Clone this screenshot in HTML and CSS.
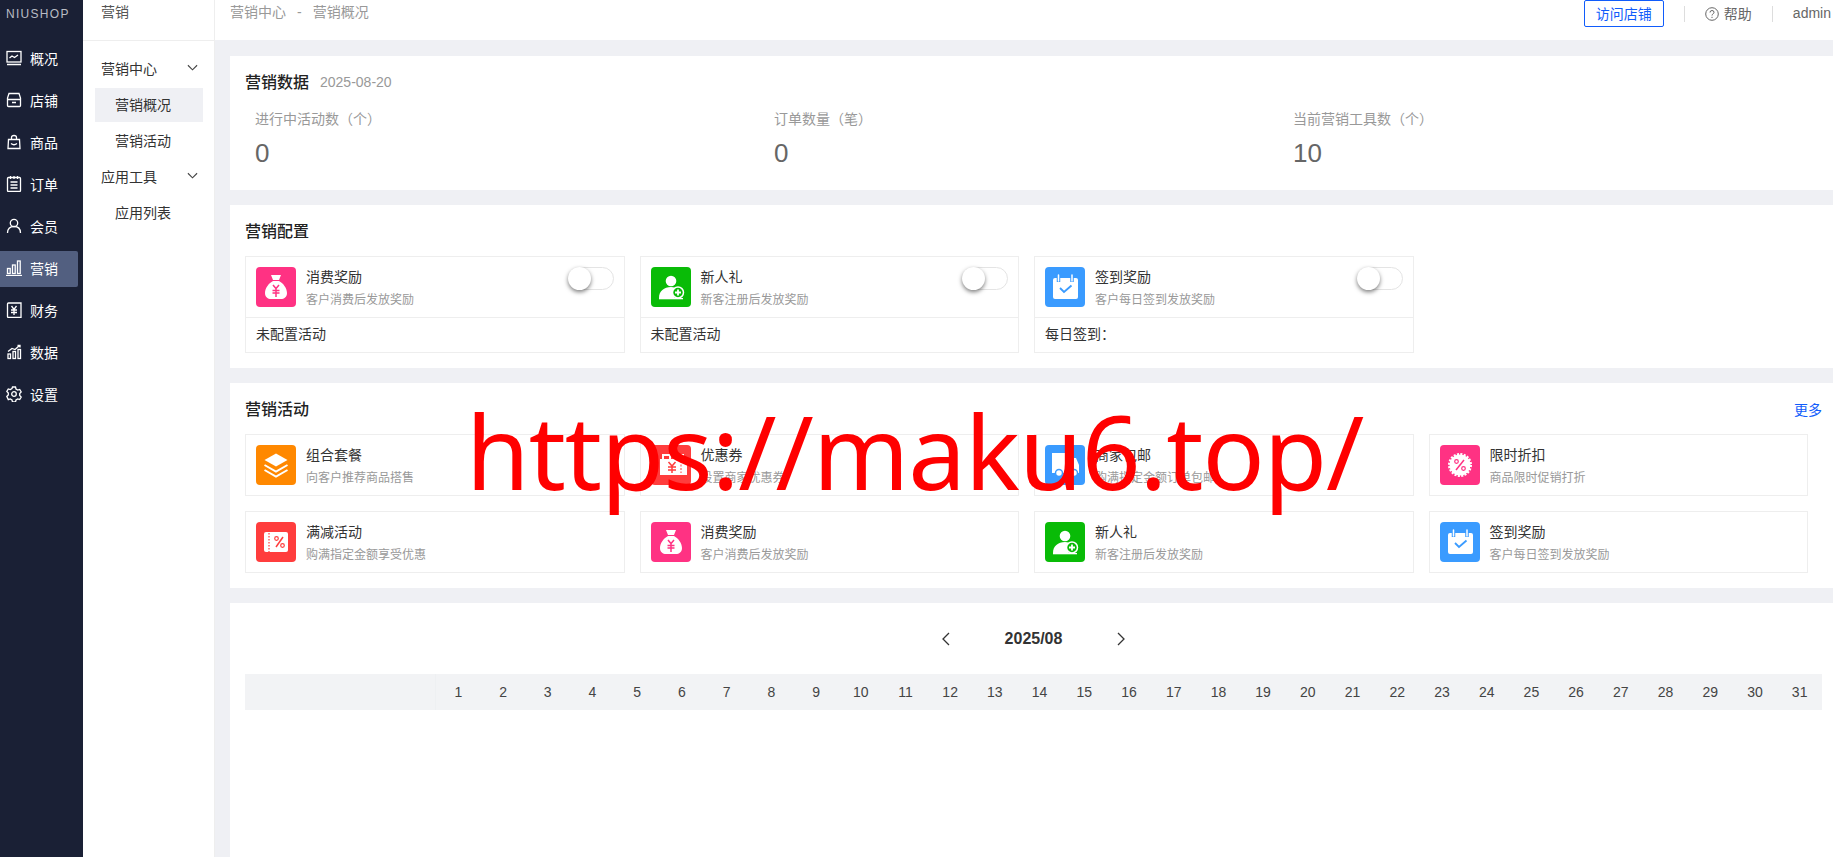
FILE: index.html
```html
<!DOCTYPE html>
<html lang="zh-CN">
<head>
<meta charset="UTF-8" />
<title>营销概况</title>
<link rel="stylesheet" href="styles.css">
</head>
<body>
<svg class="defs" width="0" height="0">
  <symbol id="ic-bag" viewBox="0 0 40 40">
    <rect width="40" height="40" rx="4" fill="#ff3283"/>
    <path d="M15 8h10l-2 5h-6z M17 14h6c4 2 8 7 8 12 0 4-3 6-6 6H15c-3 0-6-2-6-6 0-5 4-10 8-12z" fill="#fff"/>
    <path d="M17 18l3 3.500 3-3.500M16.500 23.500h7M16.500 26h7M20 21.500V30" fill="none" stroke="#ff3283" stroke-width="1.500"/>
  </symbol>
  <symbol id="ic-user" viewBox="0 0 40 40">
    <rect width="40" height="40" rx="4" fill="#09bb07"/>
    <circle cx="20" cy="14" r="5.300" fill="#fff"/>
    <path d="M8 31c0-7 5-11 12-11 3 0 5 1 6 2-3 2-4 6-2 9z" fill="#fff"/>
    <rect x="8" y="31" width="24" height="1.300" fill="#fff"/>
    <circle cx="27" cy="25.500" r="5.500" fill="#09bb07" stroke="#fff" stroke-width="1.500"/>
    <path d="M27 22.500v6M24 25.500h6" stroke="#fff" stroke-width="1.800"/>
  </symbol>
  <symbol id="ic-sign" viewBox="0 0 40 40">
    <rect width="40" height="40" rx="4" fill="#3a9bff"/>
    <rect x="8" y="11" width="25" height="21" rx="2" fill="#fff"/>
    <path d="M13.500 8v7M27 8v7" stroke="#3a9bff" stroke-width="3.500"/>
    <path d="M13.500 8v6M27 8v6" stroke="#fff" stroke-width="1.500" stroke-linecap="round"/>
    <path d="M15 21l4 4 7.500-6.500" fill="none" stroke="#3a9bff" stroke-width="1.800"/>
  </symbol>
  <symbol id="ic-layers" viewBox="0 0 40 40">
    <rect width="40" height="40" rx="4" fill="#ff8800"/>
    <path d="M20 8.500l11.500 6.500-11.500 6.500-11.500-6.500z" fill="#fff"/>
    <path d="M8.500 20l11.500 6.500 11.500-6.500M8.500 25l11.500 6.500 11.500-6.500" fill="none" stroke="#fff" stroke-width="2"/>
  </symbol>
  <symbol id="ic-coupon" viewBox="0 0 40 40">
    <rect width="40" height="40" rx="4" fill="#ff3d3d"/>
    <path d="M9 14h27v16H9z" fill="#fff"/>
    <path d="M12 14v-4h7v4M25 14v-4h7v4" fill="none" stroke="#fff" stroke-width="2"/>
    <path d="M17.500 17l3.500 4 3.500-4M17 22h8M17 25h8M21 21v7" fill="none" stroke="#ff3d3d" stroke-width="1.500"/>
    <path d="M30 16v12" stroke="#ff3d3d" stroke-width="1" stroke-dasharray="2 1.500"/>
  </symbol>
  <symbol id="ic-truck" viewBox="0 0 40 40">
    <rect width="40" height="40" rx="4" fill="#3a9bff"/>
    <path d="M7 8h21v20H7z M29 13h2l3 7v8h-5z" fill="#fff"/>
    <circle cx="14" cy="28" r="3.500" fill="#fff" stroke="#3a9bff" stroke-width="1.500"/>
    <circle cx="29" cy="28" r="3.500" fill="#fff" stroke="#3a9bff" stroke-width="1.500"/>
  </symbol>
  <symbol id="ic-percent" viewBox="0 0 40 40">
    <rect width="40" height="40" rx="4" fill="#ff3283"/>
    <circle cx="20" cy="20" r="10.500" fill="#fff" stroke="#fff" stroke-width="3" stroke-dasharray="2 1.300"/>
    <circle cx="20" cy="20" r="10" fill="#fff"/>
    <path d="M24 15l-8 10" stroke="#ff3283" stroke-width="1.500"/>
    <circle cx="16.500" cy="16.500" r="1.800" fill="none" stroke="#ff3283" stroke-width="1.200"/>
    <circle cx="23.500" cy="23.500" r="1.800" fill="none" stroke="#ff3283" stroke-width="1.200"/>
  </symbol>
  <symbol id="ic-ticket" viewBox="0 0 40 40">
    <rect width="40" height="40" rx="4" fill="#ff3d3d"/>
    <rect x="8" y="10" width="24" height="20" rx="2" fill="#fff"/>
    <path d="M13 8v24" stroke="#ff3d3d" stroke-width="1.200" stroke-dasharray="1.500 1.500"/>
    <path d="M27 15l-7 10" stroke="#ff3d3d" stroke-width="1.500"/>
    <circle cx="20.500" cy="16.500" r="1.800" fill="none" stroke="#ff3d3d" stroke-width="1.200"/>
    <circle cx="26.500" cy="23.500" r="1.800" fill="none" stroke="#ff3d3d" stroke-width="1.200"/>
  </symbol>
</svg>

<div class="app">
  <nav class="side">
    <div class="logo">NIUSHOP</div>
    <a class="side-item">
      <svg viewBox="0 0 16 16"><rect x="1" y="1.500" width="14" height="10.500"/><path d="M1 14.500h14M3.500 8l2.500-2 2.500 1.500 3.500-2.500"/></svg>
      概况
    </a>
    <a class="side-item">
      <svg viewBox="0 0 16 16"><path d="M3 1.500h10l1.500 4.500v1.500h-13V6zM1.500 8v5.500q0 1 1 1h11q1 0 1-1V8M1.500 7.500h13M6 10.500h4"/></svg>
      店铺
    </a>
    <a class="side-item">
      <svg viewBox="0 0 16 16"><path d="M2.500 5.500h11l.5 9H2zM5.500 5.500V3.500q0-2 2.500-2t2.500 2v2M5 9.500q3 2.500 6 0"/></svg>
      商品
    </a>
    <a class="side-item">
      <svg viewBox="0 0 16 16"><rect x="1.500" y="1.500" width="13" height="14" rx="1"/><path d="M4.500 0v3M8 0v3M11.500 0v3M4.500 6h7M4.500 9h7M4.500 12h7"/></svg>
      订单
    </a>
    <a class="side-item">
      <svg viewBox="0 0 16 16"><circle cx="8" cy="5" r="3.700"/><path d="M1.500 15q0-6.500 6.500-6.500t6.500 6.500"/></svg>
      会员
    </a>
    <a class="side-item active">
      <svg viewBox="0 0 16 16"><rect x="1.500" y="8.500" width="2.700" height="5"/><rect x="6.500" y="5" width="2.700" height="8.500"/><rect x="11.500" y="1" width="2.700" height="12.500"/><path d="M0 15.500h16"/></svg>
      营销
    </a>
    <a class="side-item">
      <svg viewBox="0 0 16 16"><path d="M2.500 1h12.500v14.500H2.500q-1 0-1-1V2q0-1 1-1z"/><path d="M5.500 4l2.500 3.500L10.500 4M5 8h6M5 10.500h6M8 7.500V13"/></svg>
      财务
    </a>
    <a class="side-item">
      <svg viewBox="0 0 16 16"><rect x="2" y="10" width="2.500" height="4.500"/><rect x="7" y="7.500" width="2.500" height="7"/><rect x="12" y="5.500" width="2.500" height="9"/><path d="M2 7.500l4-3 3 1 4.500-4M11.500 1.500h2.500v2"/></svg>
      数据
    </a>
    <a class="side-item">
      <svg viewBox="0 0 16 16"><path d="M6.500 1h3l.5 2 1.700 1 2-.6 1.500 2.600-1.500 1.500v2l1.500 1.500-1.500 2.600-2-.6-1.700 1-.5 2h-3l-.5-2-1.700-1-2 .6L.8 10.500 2.300 9V7L.8 5.500l1.500-2.600 2 .6L6 2.500z"/><circle cx="8" cy="8" r="2.300"/></svg>
      设置
    </a>
  </nav>

  <aside class="sub">
    <div class="sub-title">营销</div>
    <div class="sub-list">
      <div class="sub-group">营销中心<svg viewBox="0 0 12 8"><path d="M1 1l5 5 5-5"/></svg></div>
      <div class="sub-item active">营销概况</div>
      <div class="sub-item">营销活动</div>
      <div class="sub-group">应用工具<svg viewBox="0 0 12 8"><path d="M1 1l5 5 5-5"/></svg></div>
      <div class="sub-item">应用列表</div>
    </div>
  </aside>

  <div class="main">
    <header class="top">
      <div class="crumb"><span>营销中心</span><span>-</span><span>营销概况</span></div>
      <div class="top-right">
        <button class="visit">访问店铺</button>
        <i class="sep"></i>
        <div class="help">
          <svg viewBox="0 0 14 14"><circle cx="7" cy="7" r="6.300"/><path d="M5 5.500q0-2 2-2t2 1.800q0 1-1 1.600T7 8.500"/><path d="M7 9.800v1.200"/></svg>
          帮助
        </div>
        <i class="sep"></i>
        <div class="admin">admin</div>
      </div>
    </header>

    <section class="panel panel-data">
      <div class="title-row"><h2>营销数据</h2><span class="date">2025-08-20</span></div>
      <div class="stats">
        <div class="stat"><p>进行中活动数（个）</p><b>0</b></div>
        <div class="stat"><p>订单数量（笔）</p><b>0</b></div>
        <div class="stat"><p>当前营销工具数（个）</p><b>10</b></div>
      </div>
    </section>

    <section class="panel panel-config">
      <div class="title-row"><h2>营销配置</h2></div>
      <div class="grid">
        <div class="box">
          <div class="box-head">
            <svg class="icon"><use href="#ic-bag"/></svg>
            <div class="box-text"><h3>消费奖励</h3><p>客户消费后发放奖励</p></div>
            <span class="switch"></span>
          </div>
          <div class="box-foot">未配置活动</div>
        </div>
        <div class="box">
          <div class="box-head">
            <svg class="icon"><use href="#ic-user"/></svg>
            <div class="box-text"><h3>新人礼</h3><p>新客注册后发放奖励</p></div>
            <span class="switch"></span>
          </div>
          <div class="box-foot">未配置活动</div>
        </div>
        <div class="box">
          <div class="box-head">
            <svg class="icon"><use href="#ic-sign"/></svg>
            <div class="box-text"><h3>签到奖励</h3><p>客户每日签到发放奖励</p></div>
            <span class="switch"></span>
          </div>
          <div class="box-foot">每日签到：</div>
        </div>
      </div>
    </section>

    <section class="panel panel-act">
      <div class="title-row between"><h2>营销活动</h2><a class="more">更多</a></div>
      <div class="grid">
        <div class="box box-head"><svg class="icon"><use href="#ic-layers"/></svg><div class="box-text"><h3>组合套餐</h3><p>向客户推荐商品搭售</p></div></div>
        <div class="box box-head"><svg class="icon"><use href="#ic-coupon"/></svg><div class="box-text"><h3>优惠券</h3><p>设置商家优惠券</p></div></div>
        <div class="box box-head"><svg class="icon"><use href="#ic-truck"/></svg><div class="box-text"><h3>商家包邮</h3><p>购满指定金额订单包邮</p></div></div>
        <div class="box box-head"><svg class="icon"><use href="#ic-percent"/></svg><div class="box-text"><h3>限时折扣</h3><p>商品限时促销打折</p></div></div>
        <div class="box box-head"><svg class="icon"><use href="#ic-ticket"/></svg><div class="box-text"><h3>满减活动</h3><p>购满指定金额享受优惠</p></div></div>
        <div class="box box-head"><svg class="icon"><use href="#ic-bag"/></svg><div class="box-text"><h3>消费奖励</h3><p>客户消费后发放奖励</p></div></div>
        <div class="box box-head"><svg class="icon"><use href="#ic-user"/></svg><div class="box-text"><h3>新人礼</h3><p>新客注册后发放奖励</p></div></div>
        <div class="box box-head"><svg class="icon"><use href="#ic-sign"/></svg><div class="box-text"><h3>签到奖励</h3><p>客户每日签到发放奖励</p></div></div>
      </div>
    </section>

    <section class="panel panel-cal">
      <div class="month">
        <svg viewBox="0 0 8 14"><path d="M7 1L1 7l6 6"/></svg>
        <b>2025/08</b>
        <svg viewBox="0 0 8 14"><path d="M1 1l6 6-6 6"/></svg>
      </div>
      <div class="days">
        <div class="days-label"></div>
        <span>1</span><span>2</span><span>3</span><span>4</span><span>5</span><span>6</span><span>7</span><span>8</span><span>9</span><span>10</span>
        <span>11</span><span>12</span><span>13</span><span>14</span><span>15</span><span>16</span><span>17</span><span>18</span><span>19</span><span>20</span>
        <span>21</span><span>22</span><span>23</span><span>24</span><span>25</span><span>26</span><span>27</span><span>28</span><span>29</span><span>30</span><span>31</span>
      </div>
    </section>
  </div>

  <div class="watermark">https://maku6.top/</div>
</div>
</body>
</html>
```

FILE: styles.css
```css
* {
  box-sizing: border-box;
}
html, body {
  margin: 0;
  height: 100%;
  overflow: hidden;
}
body {
  font-family: "Liberation Sans", "Noto Sans CJK SC", sans-serif;
  font-size: 14px;
  color: #333;
  background: #eff0f4;
}
h2, h3, p {
  margin: 0;
  font-weight: normal;
}
.defs {
  position: absolute;
}
.app {
  display: flex;
  height: 857px;
  position: relative;
}

/* left nav */
.side {
  width: 83px;
  flex: none;
  background: #1a2035;
  color: #fff;
}
.logo {
  height: 41px;
  padding: 6px 0 0 6px;
  font-size: 12px;
  line-height: 17px;
  letter-spacing: 1.300px;
  color: #b9bcc4;
}
.side-item {
  display: flex;
  align-items: center;
  gap: 8px;
  width: 78px;
  height: 36px;
  margin-bottom: 6px;
  padding: 0 0 2px 6px;
  border-radius: 0 2px 2px 0;
}
.side-item svg {
  width: 16px;
  height: 16px;
  fill: none;
  stroke: #fff;
  stroke-width: 1.300;
}
.side-item.active {
  background: #525f80;
}

/* second nav */
.sub {
  width: 132px;
  flex: none;
  background: #fff;
  border-right: 1px solid #eee;
}
.sub-title {
  height: 41px;
  padding: 3px 0 0 18px;
  line-height: 19px;
  color: #555;
  border-bottom: 1px solid #eee;
}
.sub-list {
  padding: 10px 11px 0 12px;
}
.sub-group, .sub-item {
  height: 36px;
  line-height: 36px;
}
.sub-group {
  display: flex;
  justify-content: space-between;
  align-items: center;
  padding: 0 5px 0 6px;
}
.sub-group svg {
  width: 11px;
  height: 8px;
  fill: none;
  stroke: #444;
  stroke-width: 1.200;
  margin-top: -3px;
}
.sub-item {
  padding-left: 20px;
}
.sub-item.active {
  height: 34px;
  line-height: 34px;
  margin: 1px 0;
  background: #eff0f4;
}

/* header */
.main {
  flex: 1;
  min-width: 0;
}
.top {
  height: 40px;
  padding: 0 2px 0 15px;
  display: flex;
  justify-content: space-between;
  background: #fff;
}
.crumb {
  display: flex;
  gap: 11px;
  line-height: 25px;
  color: #999;
}
.top-right {
  display: flex;
  align-items: flex-start;
  color: #666;
  line-height: 26px;
}
.visit {
  width: 80px;
  height: 27px;
  padding: 0;
  border: 1px solid #105cfb;
  border-radius: 2px;
  background: #fff;
  color: #105cfb;
  font: inherit;
}
.sep {
  width: 1px;
  height: 16px;
  margin: 6px 20px 0;
  background: #ddd;
}
.help {
  display: flex;
  align-items: center;
  gap: 5px;
  margin-top: 1px;
}
.help svg {
  width: 14px;
  height: 14px;
  fill: none;
  stroke: #666;
  stroke-width: 1;
}

/* panels */
.panel {
  margin: 15px 0 0 15px;
  padding: 0 11px 0 15px;
  background: #fff;
}
.panel-data {
  margin-top: 16px;
  height: 134px;
}
.panel-config {
  height: 163px;
}
.panel-act {
  height: 205px;
}
.panel-cal {
  height: 260px;
}
.title-row {
  display: flex;
  align-items: center;
  gap: 11px;
  height: 51px;
}
.title-row.between {
  justify-content: space-between;
}
h2 {
  margin-bottom: 2px;
  font-size: 16px;
  font-weight: 500;
  color: #222;
}
.date {
  color: #999;
}
.more {
  color: #105cfb;
}
.stats {
  display: grid;
  grid-template-columns: repeat(3, 1fr);
  padding: 0 10px;
}
.stat p {
  color: #999;
  line-height: 24px;
}
.stat b {
  display: block;
  margin-top: 4px;
  font-size: 26px;
  font-weight: normal;
  line-height: 36px;
  color: #666;
}
.grid {
  display: grid;
  grid-template-columns: repeat(4, 1fr);
  gap: 15px;
  margin-right: 14px;
}
.box {
  border: 1px solid #eee;
}
.box-head {
  display: flex;
  padding: 10px;
  height: 62px;
  position: relative;
}
.box > .box-head {
  height: 61px;
  border-bottom: 1px solid #eee;
}
.icon {
  width: 40px;
  height: 40px;
  flex: none;
  margin-right: 10px;
}
.box-text h3 {
  font-size: 14px;
  line-height: 20px;
  color: #333;
}
.box-text p {
  margin-top: 5px;
  font-size: 12px;
  line-height: 17px;
  color: #999;
}
.box-foot {
  height: 34px;
  line-height: 32px;
  padding-left: 10px;
}
.switch {
  position: absolute;
  top: 10px;
  right: 10px;
  width: 46px;
  height: 23px;
  border: 1px solid #e4e4e4;
  border-radius: 12px;
  background: #fff;
}
.switch::before {
  content: "";
  position: absolute;
  left: -1px;
  top: -1px;
  width: 23px;
  height: 23px;
  border-radius: 50%;
  background: #fff;
  box-shadow: 0 2px 4px rgba(0,0,0,.5);
}
.month {
  display: flex;
  justify-content: center;
  align-items: center;
  gap: 55px;
  height: 71px;
}
.month svg {
  width: 8px;
  height: 14px;
  fill: none;
  stroke: #333;
  stroke-width: 1.300;
}
.month b {
  font-size: 16px;
}
.days {
  display: grid;
  grid-template-columns: 191px repeat(31, 1fr);
  height: 36px;
  align-items: center;
  background: #f2f3f5;
  text-align: center;
  color: #444;
}
.days-label {
  height: 100%;
  border-right: 1px solid #eef0f2;
}

/* site watermark across the page */
.watermark {
  position: absolute;
  left: 466px;
  top: 379px;
  font-family: "Noto Sans", sans-serif;
  font-size: 103px;
  letter-spacing: -1px;
  line-height: 143px;
  color: #f00;
  white-space: nowrap;
}
```
